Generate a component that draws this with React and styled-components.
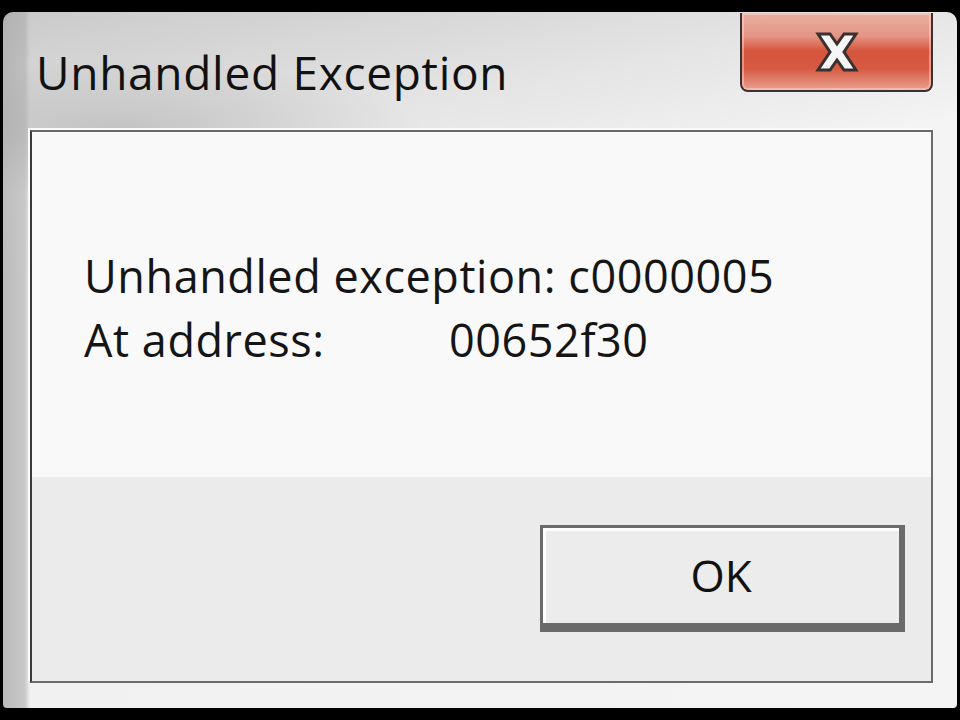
import React from "react";
import styled, { createGlobalStyle } from "styled-components";

const Global = createGlobalStyle`
  html, body {
    margin: 0;
    padding: 0;
    background: #000;
  }
  #root {
    width: 960px;
    height: 720px;
    overflow: hidden;
  }
`;

const Screen = styled.div`
  width: 960px;
  height: 720px;
  padding: 12px 3px;
  box-sizing: border-box;
  background: #000;
`;

const Window = styled.div`
  height: 100%;
  display: flex;
  flex-direction: column;
  border-radius: 10px 10px 4px 4px;
  background:
    radial-gradient(ellipse 300px 70px at 120px 118px, rgba(160, 160, 160, 0.45), rgba(200, 200, 200, 0) 100%),
    linear-gradient(170deg, rgba(170, 170, 170, 0.55) 0%, rgba(200, 200, 200, 0.35) 18%, rgba(245, 245, 245, 0) 32%),
    linear-gradient(90deg, #b9b9b9 0px, #c9c9c9 22px, #f1f1f1 27px, #f4f4f4 100%);
  font-family: "Open Sans", "DejaVu Sans", sans-serif;
`;

const TitleBar = styled.div`
  height: 118px;
  flex: 0 0 auto;
  display: flex;
  align-items: flex-start;
  justify-content: space-between;
  padding: 0 24px 0 33px;
`;

const Title = styled.div`
  margin-top: 37px;
  font-size: 46px;
  line-height: 1;
  color: #111;
  letter-spacing: 0.7px;
`;

const CloseButton = styled.div`
  margin-top: 1px;
  width: 193px;
  height: 79px;
  box-sizing: border-box;
  border: 2px solid #3c3030;
  border-top: none;
  border-radius: 0 0 8px 8px;
  background: linear-gradient(
    180deg,
    #eab0a2 0%,
    #e49584 30%,
    #d6543c 50%,
    #d65a42 72%,
    #eaa090 100%
  );
  display: flex;
  align-items: center;
  justify-content: center;
  box-shadow: inset 0 0 0 2px rgba(255, 220, 210, 0.45);
`;

const Panel = styled.div`
  flex: 1 1 auto;
  margin: 0 24px 25px 27px;
  display: flex;
  flex-direction: column;
  border: 2px solid #6b6b6b;
  border-left-color: #3a3a3a;
  box-shadow: -2px -2px 0 #fafafa;
`;

const MessageArea = styled.div`
  flex: 0 0 345px;
  background: #f9f9f9;
  padding: 112px 0 0 52px;
  box-sizing: border-box;
`;

const Line = styled.div`
  display: flex;
  font-size: 45px;
  line-height: 64px;
  color: #151515;
  letter-spacing: 0.55px;
  white-space: pre;
`;

const Label = styled.span`
  width: ${(p) => p.$w || "auto"};
  display: inline-block;
`;

const Footer = styled.div`
  flex: 1 1 auto;
  background: #ebebeb;
  display: flex;
  justify-content: flex-end;
  align-items: flex-start;
  padding: 48px 26px 0 0;
`;

const OkButton = styled.div`
  width: 365px;
  height: 107px;
  box-sizing: border-box;
  border: 3px solid #6a6a6a;
  border-bottom-width: 9px;
  border-right-width: 6px;
  background: #ececec;
  box-shadow: inset 3px 3px 0 #ffffff;
  display: flex;
  align-items: center;
  justify-content: center;
  font-size: 44px;
  color: #111;
  padding-bottom: 2px;
`;

const CloseIcon = () => (
  <svg width="46" height="42" viewBox="0 0 46 42">
    <path
      d="M4 3 L16 3 L23 13 L30 3 L42 3 L30 21 L42 39 L30 39 L23 29 L16 39 L4 39 L16 21 Z"
      fill="#f6f6f6"
      stroke="#3a3030"
      strokeWidth="3"
      strokeLinejoin="miter"
    />
  </svg>
);

export default function App() {
  return (
    <>
      <Global />
      <Screen>
        <Window>
          <TitleBar>
            <Title>Unhandled Exception</Title>
            <CloseButton>
              <CloseIcon />
            </CloseButton>
          </TitleBar>
          <Panel>
            <MessageArea>
              <Line>Unhandled exception: c0000005</Line>
              <Line>
                <Label $w="365px">At address:</Label>
                <span>00652f30</span>
              </Line>
            </MessageArea>
            <Footer>
              <OkButton>OK</OkButton>
            </Footer>
          </Panel>
        </Window>
      </Screen>
    </>
  );
}
